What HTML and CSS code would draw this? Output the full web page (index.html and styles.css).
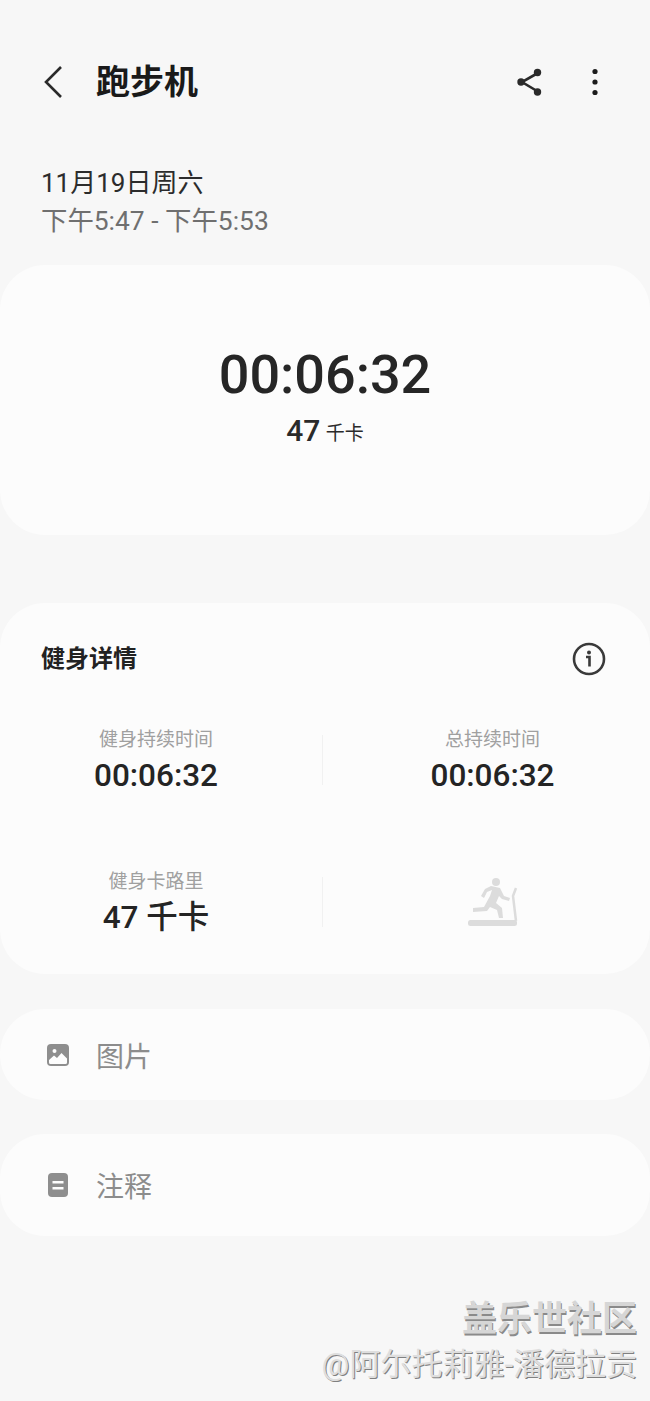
FILE: index.html
```html
<!DOCTYPE html>
<html lang="zh-CN">
<head>
  <meta charset="UTF-8" />
  <meta name="viewport" content="width=device-width, initial-scale=1.0"/>
  <title>跑步机</title>
  <link rel="stylesheet" href="styles.css">
</head>
<body>
  <div class="page">
    <header class="topbar">
      <svg class="back" width="22" height="34" viewBox="0 0 22 34"><path d="M18 2 L3 17 L18 32" fill="none" stroke="#2a2a2a" stroke-width="2.6"/></svg>
      <h1>跑步机</h1>
      <svg class="share" width="28" height="28" viewBox="0 0 28 28">
        <path d="M21 5.5 L6 14 L21 23" fill="none" stroke="#2a2a2a" stroke-width="2.6"/>
        <circle cx="21.500" cy="4.500" r="3.700" fill="#2a2a2a"/>
        <circle cx="5" cy="14" r="3.700" fill="#2a2a2a"/>
        <circle cx="21.500" cy="24" r="3.700" fill="#2a2a2a"/>
      </svg>
      <svg class="more" width="8" height="28" viewBox="0 0 8 28">
        <circle cx="4" cy="3.500" r="2.600" fill="#1c1c1c"/>
        <circle cx="4" cy="14" r="2.600" fill="#1c1c1c"/>
        <circle cx="4" cy="24.500" r="2.600" fill="#1c1c1c"/>
      </svg>
    </header>

    <div class="when">
      <div class="date">11月19日周六</div>
      <div class="time">下午5:47 - 下午5:53</div>
    </div>

    <section class="card summary">
      <div class="big">00:06:32</div>
      <div class="kcal">47 <span>千卡</span></div>
    </section>

    <section class="card details">
      <div class="details-head">
        <h2>健身详情</h2>
        <svg width="34" height="34" viewBox="0 0 34 34">
          <circle cx="17" cy="17" r="15" fill="none" stroke="#3a3a3a" stroke-width="2.600"/>
          <circle cx="17" cy="10.500" r="2" fill="#3a3a3a"/>
          <path d="M14 15 H17.500 V24.500" fill="none" stroke="#3a3a3a" stroke-width="2.600"/>
        </svg>
      </div>
      <div class="stats">
        <div class="stat">
          <div class="label">健身持续时间</div>
          <div class="value">00:06:32</div>
        </div>
        <div class="stat">
          <div class="label">总持续时间</div>
          <div class="value">00:06:32</div>
        </div>
        <div class="stat">
          <div class="label">健身卡路里</div>
          <div class="value">47 千卡</div>
        </div>
        <div class="stat">
          <svg width="52" height="50" viewBox="0 0 52 50">
            <circle cx="29" cy="5" r="4" fill="#dcdcdc"/>
            <path d="M24 9 L33 11 L37 19 L43 21 L42 24 L35 22 L32 19 L29 26 L35 31 L36 41 L32 41 L30 33 L23 30 L20 34 L6 35 L6 31 L17 30 L23 19 L25 13 L20 15 L17 21 L14 19 L18 12 Z" fill="#dcdcdc"/>
            <path d="M49 11 L46 19 L49 44" fill="none" stroke="#dcdcdc" stroke-width="2.500"/>
            <rect x="1" y="43" width="49" height="6" rx="2.500" fill="#dcdcdc"/>
          </svg>
        </div>
      </div>
    </section>

    <section class="card row row-photo">
      <svg width="24" height="24" viewBox="0 0 24 24">
        <rect x="1" y="1" width="22" height="22" rx="4" fill="#8e8e8e"/>
        <circle cx="8.500" cy="8" r="2" fill="#fdfdfd"/>
        <path d="M3 19.500 V17 L8 12.500 L11 15 L15.500 10 L21 15.500 V19.500 Q21 21 19.500 21 H4.500 Q3 21 3 19.500 Z" fill="#fdfdfd"/>
      </svg>
      <span>图片</span>
    </section>

    <section class="card row row-note">
      <svg width="24" height="26" viewBox="0 0 24 26">
        <rect x="2" y="1" width="20" height="24" rx="4" fill="#8e8e8e"/>
        <rect x="6.500" y="9" width="11" height="2.500" fill="#fdfdfd"/>
        <rect x="6.500" y="15" width="11" height="2.500" fill="#fdfdfd"/>
      </svg>
      <span>注释</span>
    </section>

    <footer class="mark">
      <div class="mark-name">盖乐世社区</div>
      <div class="mark-user">@阿尔托莉雅-潘德拉贡</div>
    </footer>
  </div>
</body>
</html>
```

FILE: styles.css
```css
* {
  box-sizing: border-box;
}

body {
  margin: 0;
  background: #f7f7f7;
  font-family: Roboto, "Noto Sans CJK SC", sans-serif;
  color: #222;
}

.page {
  width: 650px;
  height: 1401px;
  overflow: hidden;
}

.topbar {
  display: flex;
  align-items: center;
  height: 34px;
  margin-top: 65px;
  padding-left: 43px;
}

.topbar h1 {
  margin: 0 0 0 31px;
  font-size: 34px;
  line-height: 34px;
  font-weight: 700;
  color: #1a1a1a;
}

.share {
  margin-left: auto;
}

.more {
  margin-left: 47px;
  margin-right: 51px;
}

.when {
  margin-top: 65px;
  padding-left: 41px;
  font-size: 26px;
  line-height: 38px;
}

.date {
  color: #2c2c2c;
}

.time {
  font-size: 26.400px;
  color: #6f6f6f;
}

.card {
  background: #fcfcfc;
  border-radius: 45px;
}

.summary {
  height: 270px;
  margin-top: 25px;
  padding-top: 78px;
  text-align: center;
}

.big {
  font-size: 54px;
  line-height: 64px;
  font-weight: 500;
  color: #262626;
}

.kcal {
  margin-top: 3px;
  font-size: 30px;
  line-height: 42px;
  font-weight: 500;
  color: #2a2a2a;
}

.kcal span {
  margin-left: -2px;
  font-size: 19px;
  font-weight: 400;
  vertical-align: 1px;
}

.details {
  height: 371px;
  margin-top: 68px;
}

.details-head {
  display: flex;
  align-items: center;
  justify-content: space-between;
  padding: 39px 44px 0 41px;
}

.details-head h2 {
  margin: 0;
  font-size: 24px;
  line-height: 34px;
  font-weight: 700;
  color: #222;
}

.stats {
  display: grid;
  grid-template-columns: 323px 1fr;
  grid-auto-rows: 50px;
  row-gap: 92px;
  margin-top: 59px;
  text-align: center;
}

.stat {
  display: flex;
  flex-direction: column;
  align-items: center;
  justify-content: center;
}

.stat:nth-child(odd) {
  padding-right: 10px;
  border-right: 1px solid #f1f1f1;
}

.stat:nth-child(even) {
  padding-left: 12px;
}

.label {
  margin-bottom: 5px;
  font-size: 19px;
  line-height: 26px;
  color: #a0a0a0;
}

.value {
  font-size: 31.500px;
  line-height: 36px;
  font-weight: 500;
  color: #242424;
}

.row {
  display: flex;
  align-items: center;
  padding-left: 46px;
  font-size: 28px;
  color: #8c8c8c;
}

.row span {
  margin-left: 26px;
}

.row-photo {
  height: 91px;
  margin-top: 35px;
}

.row-note {
  height: 102px;
  margin-top: 34px;
}

.mark {
  margin-top: 63px;
  padding-right: 13px;
  text-align: right;
}

.mark-name {
  font-size: 35px;
  line-height: 42px;
  font-weight: 700;
  color: #d6d6d6;
  text-shadow: 1px 2px 0 #8a8a8a;
}

.mark-user {
  margin-top: 5px;
  font-size: 31px;
  line-height: 38px;
  color: #dedede;
  text-shadow: 1px 1px 0 #808080;
}
```
